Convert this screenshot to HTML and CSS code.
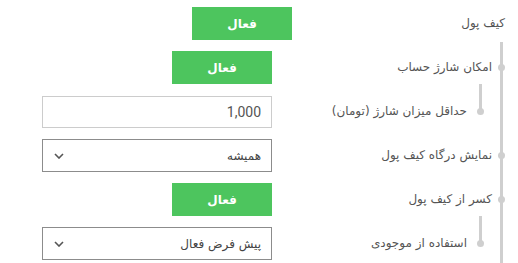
FILE: index.html
```html
<!DOCTYPE html>
<html lang="fa" dir="rtl">
<head>
<meta charset="utf-8">
<link rel="stylesheet" href="styles.css">
</head>
<body>
<div class="form">
  <div class="row row-top">
    <div class="label lvl0">کیف پول</div>
    <div class="control"><button class="btn">فعال</button></div>
  </div>
  <div class="group">
    <div class="row">
      <div class="label lvl1">امکان شارژ حساب</div>
      <div class="control"><button class="btn">فعال</button></div>
    </div>
    <div class="row">
      <div class="label lvl2">حداقل میزان شارژ (تومان)</div>
      <div class="control"><div class="input">1,000</div></div>
    </div>
    <div class="row">
      <div class="label lvl1">نمایش درگاه کیف پول</div>
      <div class="control">
        <div class="select"><span>همیشه</span>
          <svg class="chev" width="10" height="6" viewBox="0 0 10 6"><polyline points="1,1 5,5 9,1" fill="none" stroke="#555" stroke-width="1.6"/></svg>
        </div>
      </div>
    </div>
    <div class="row">
      <div class="label lvl1">کسر از کیف پول</div>
      <div class="control"><button class="btn">فعال</button></div>
    </div>
    <div class="row">
      <div class="label lvl2">استفاده از موجودی</div>
      <div class="control">
        <div class="select"><span>پیش فرض فعال</span>
          <svg class="chev" width="10" height="6" viewBox="0 0 10 6"><polyline points="1,1 5,5 9,1" fill="none" stroke="#555" stroke-width="1.6"/></svg>
        </div>
      </div>
    </div>
  </div>
</div>
</body>
</html>
```

FILE: styles.css
```css
html, body {
  margin: 0;
  padding: 0;
  background: #fff;
  overflow: hidden;
  height: 263px;
}
body {
  font-family: "DejaVu Sans", sans-serif;
  font-size: 12px;
  color: #555;
}
.form {
  width: 518px;
  padding-top: 7px;
  display: flex;
  flex-direction: column;
  gap: 11px;
}
.group {
  position: relative;
  display: flex;
  flex-direction: column;
  gap: 11px;
}
.group::before {
  content: "";
  position: absolute;
  right: 15px;
  top: -9px;
  bottom: -3px;
  width: 3px;
  background: #cfcfcf;
}
.row {
  display: flex;
  align-items: center;
  height: 33px;
}
.label {
  position: relative;
  width: 246px;
  flex: none;
  box-sizing: border-box;
  white-space: nowrap;
  line-height: 33px;
  height: 33px;
}
.row-top .label {
  width: 226px;
}
.lvl0 { padding-right: 13px; }
.lvl1 { padding-right: 26px; }
.lvl2 { padding-right: 51px; }
.lvl1::after, .lvl2::after {
  content: "";
  position: absolute;
  width: 7px;
  height: 7px;
  border-radius: 50%;
  background: #cfcfcf;
  top: 13px;
}
.lvl1::after { right: 13px; }
.lvl2::after { right: 34px; }
.lvl2::before {
  content: "";
  position: absolute;
  right: 36px;
  top: -11px;
  height: 28px;
  width: 3px;
  background: #cfcfcf;
}
.control {
  display: flex;
}
.btn {
  width: 100px;
  height: 33px;
  border: none;
  background: #4dc55e;
  color: #fff;
  font-family: "DejaVu Sans", sans-serif;
  font-size: 12px;
  font-weight: bold;
  padding: 0;
}
.input {
  width: 230px;
  height: 32px;
  box-sizing: border-box;
  border: 1px solid #cccccc;
  font-family: Roboto, sans-serif;
  font-size: 14px;
  color: #555;
  line-height: 30px;
  padding-right: 10px;
  direction: ltr;
  text-align: right;
}
.select {
  width: 230px;
  height: 33px;
  box-sizing: border-box;
  border: 1px solid #8c8c8c;
  display: flex;
  align-items: center;
  justify-content: space-between;
  padding: 0 10px 0 11px;
  color: #444;
}
.chev { display: block; }
```
